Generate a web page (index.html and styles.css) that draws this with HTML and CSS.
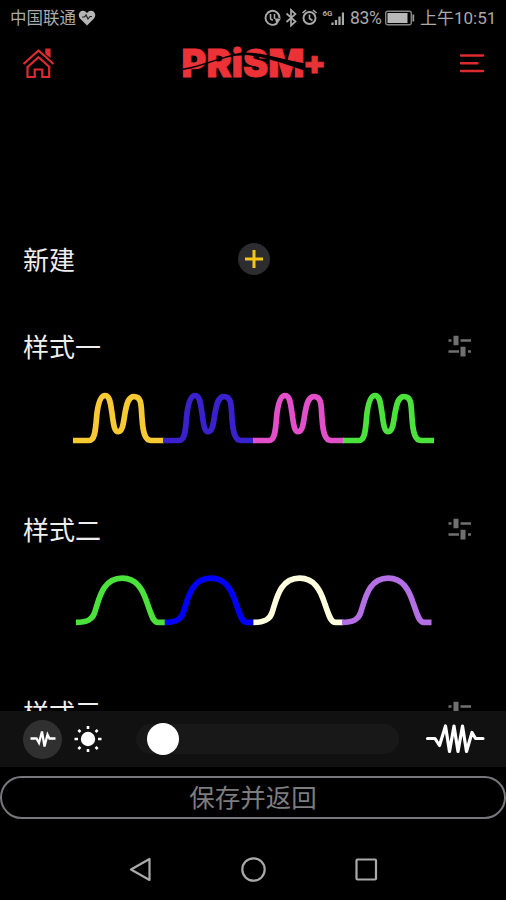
FILE: index.html
```html
<!DOCTYPE html>
<html lang="zh-CN">
<head>
  <meta charset="UTF-8">
  <meta name="viewport" content="width=device-width, initial-scale=1.0">
  <title>PRiSM+</title>
  <link rel="stylesheet" href="styles.css">
</head>
<body>
  <div class="screen">
    <!-- Status bar -->
    <div class="status-bar">
      <span class="carrier">中国联通</span>
      <svg class="heart" width="18" height="16" viewBox="0 0 18 16">
        <path d="M9 15.5 L2 8.5 C-1.5 4 3 -1.5 7.5 1.5 L9 3 L10.500 1.500 C15 -1.500 19.500 4 16 8.500 Z" fill="#b5b5b5"/>
        <path d="M4 7 H6.500 L8 5 L10 9 L12 6.500 H14" fill="none" stroke="#222" stroke-width="1.200"/>
      </svg>
      <div class="status-right">
        <svg width="82" height="20" viewBox="263 8 82 20" fill="none" stroke="#aaa" stroke-width="1.900">
          <path d="M278 23.200 A7 7 0 1 1 280.500 18"/>
          <path d="M271.500 14 V18 Q271.500 20 274 20 M275.500 14 V19" stroke-width="1.600"/>
          <path d="M276 18.500 H282 L277.500 25 Z" fill="#aaa" stroke="none"/>
          <path d="M287.500 13.500 L296.500 21.500 L292 25.500 V10 L296.500 14 L287.500 22" stroke-width="1.700"/>
          <circle cx="310.500" cy="18" r="6"/>
          <path d="M310.500 14.500 V18.500 L313.500 20.500 M303.500 13 L307 10 M314 10 L317.500 13" stroke-width="1.600"/>
          <text x="323.500" y="16" class="network">6G</text>
          <path d="M333.500 25 V22.500 M337 25 V20 M340.500 25 V16.500 M344 25 V12.500" stroke-width="2.300"/>
        </svg>
        <span class="percent">83%</span>
        <svg class="battery" width="30" height="16" viewBox="0 0 30 16">
          <rect x="0.700" y="1.200" width="25.600" height="13.600" rx="2" fill="none" stroke="#858585" stroke-width="1.400"/>
          <rect x="2.500" y="3" width="20" height="10" fill="#b8b8b8"/>
          <rect x="27.400" y="4.500" width="1.800" height="7" fill="#999"/>
        </svg>
        <span class="time">上午10:51</span>
      </div>
    </div>

    <!-- Header -->
    <header class="header">
      <svg width="34" height="32" viewBox="22 47 34 32" fill="none" stroke="#dc2a30" stroke-width="2.200">
        <path d="M23.500 64 L38.500 50.500 L53.500 64"/>
        <path d="M27.500 66.500 V77 H34.700 V69.500 H42.300 V77 H49.200 V66.500"/>
        <path d="M27 67.500 L38.500 57.300 L50 67.500"/>
        <path d="M45.300 48.500 H50.600 V58 L45.300 54 Z" fill="#dc2a30" stroke="none"/>
      </svg>
      <svg class="logo" width="152" height="54" viewBox="178 36 152 54">
        <text x="181.500" y="76.500" class="logo-text" textLength="123" lengthAdjust="spacingAndGlyphs">PRiSM</text>
        <text x="303" y="74" class="logo-plus" textLength="23" lengthAdjust="spacingAndGlyphs">+</text>
        <path d="M183 68.500 C204 65 223 56 239 53 C257 50.500 284 60 305 63.500 L304 70.500 C283 63.500 260 55 242 55 C224 56 205 66.500 183 70 Z" fill="#000"/>
      </svg>
      <svg width="26" height="24" viewBox="459 51 26 24" stroke="#dc2a30" stroke-width="2.400" stroke-linecap="round">
        <path d="M461 55.500 H483 M461 63.300 H477.500 M461 71 H483"/>
      </svg>
    </header>

    <!-- Style list -->
    <main class="list">
      <div class="new-row">
        <h2>新建</h2>
        <button class="add-btn">
          <svg width="18" height="18" viewBox="0 0 18 18" stroke="#f5c518" stroke-width="3"><path d="M0 9 H18 M9 0 V18"/></svg>
        </button>
      </div>

      <section class="style-item">
        <div class="style-head">
          <h2>样式一</h2>
          <svg class="adjust" viewBox="0 0 24 22"><path d="M0.500 5.500 H3.500 M12.500 5.500 H23 M0.500 16.500 H11 M20 16.500 H23"/><path class="knob" d="M8 0.700 V10.300 M15 11.700 V21.500"/></svg>
        </div>
        <svg class="wave" viewBox="0 380 506 75">
          <defs>
            <path id="double" d="M73 440.500 H89 C96 440.500 95.500 426 97 413 C98.500 402 101 395.500 105 395.500 C110 395.500 110.500 404 112 413 C113.500 425 114.500 431.700 118.300 431.700 C122.800 431.700 123.500 422 125 413 C127 402 129 396.500 134 396.500 C142 396.500 141 406 142 418 C143 434 145.500 440.500 151 440.500 H164"/>
          </defs>
          <use href="#double" stroke="#f7ca33"/>
          <use href="#double" x="90" stroke="#3b20ce"/>
          <use href="#double" x="180" stroke="#e34fca"/>
          <use href="#double" x="270" stroke="#4be33b"/>
        </svg>
      </section>

      <section class="style-item">
        <div class="style-head">
          <h2>样式二</h2>
          <svg class="adjust" viewBox="0 0 24 22"><path d="M0.500 5.500 H3.500 M12.500 5.500 H23 M0.500 16.500 H11 M20 16.500 H23"/><path class="knob" d="M8 0.700 V10.300 M15 11.700 V21.500"/></svg>
        </div>
        <svg class="wave" viewBox="0 563 506 75">
          <defs>
            <path id="single" d="M76 622.300 C88 622.300 92.500 619 94.500 613 C99 600 102 578.200 122.300 578.200 C137 578.200 143 590 147.500 604 C151.500 615 153 622.300 158 622.300 H165.500"/>
          </defs>
          <use href="#single" stroke="#4be33b"/>
          <use href="#single" x="88.700" stroke="#0000fa"/>
          <use href="#single" x="177.400" stroke="#ffffdf"/>
          <use href="#single" x="266" stroke="#b56fe4"/>
        </svg>
      </section>

      <section class="style-item">
        <div class="style-head">
          <h2>样式三</h2>
          <svg class="adjust" viewBox="0 0 24 22"><path d="M0.500 5.500 H3.500 M12.500 5.500 H23 M0.500 16.500 H11 M20 16.500 H23"/><path class="knob" d="M8 0.700 V10.300 M15 11.700 V21.500"/></svg>
        </div>
      </section>
    </main>

    <!-- Speed / brightness controls -->
    <div class="controls">
      <div class="mode active">
        <svg width="26" height="20" viewBox="0 0 26 20" fill="none" stroke="#fff" stroke-width="2.300"><path d="M0.500 9.500 H6.500 L9 14 L12 2.500 L14.500 17.500 L17.500 5.500 L19.500 9.500 H25.500"/></svg>
      </div>
      <svg class="sun" width="28" height="28" viewBox="-14 -14 28 28" stroke="#fff" stroke-width="2.600">
        <circle r="7.200" fill="#fff" stroke="none"/>
        <path d="M0 -13 V-10 M0 10 V13 M-13.500 0 H-10 M10 0 H13.500 M-9.700 -9 L-7.500 -7 M9.700 -9 L7.500 -7 M-9.700 10 L-7.500 8 M9.700 10 L7.500 8"/>
      </svg>
      <div class="slider"><div class="thumb"></div></div>
      <svg class="fast" width="60" height="32" viewBox="0 0 60 32" fill="none" stroke="#fff" stroke-width="3.200" stroke-linecap="round" stroke-linejoin="round">
        <path d="M2.500 15.500 H10 L14.500 22.500 L20.500 3 L24.500 28.500 L29 3 L33 28.500 L37.500 3 L41.500 28.500 L47 9.500 L50.500 15.500 H58"/>
      </svg>
    </div>

    <button class="save-btn">保存并返回</button>

    <nav class="nav-bar">
      <svg width="24" height="26" viewBox="0 0 24 26"><path d="M21.500 2 V23 L3 12.500 Z"/></svg>
      <svg width="26" height="26" viewBox="0 0 26 26"><circle cx="13.500" cy="12.500" r="11.200"/></svg>
      <svg width="24" height="26" viewBox="0 0 24 26"><rect x="2.500" y="2.500" width="19.500" height="20" rx="1"/></svg>
    </nav>
  </div>
</body>
</html>
```
FILE: styles.css
```css
* {
  margin: 0;
  padding: 0;
  box-sizing: border-box;
}

body {
  background-color: #000;
  color: #eee;
  font-family: Roboto, 'Noto Sans CJK SC', sans-serif;
  overflow: hidden;
}

svg {
  display: block;
  flex-shrink: 0;
}

.screen {
  width: 506px;
  height: 900px;
  display: flex;
  flex-direction: column;
}

/* Status bar */
.status-bar {
  height: 36px;
  padding: 0 11px 0 10px;
  display: flex;
  align-items: center;
  color: #aaa;
  font-size: 16.5px;
  line-height: 36px;
  white-space: nowrap;
}

.carrier {
  padding-top: 1px;
}

.heart {
  margin-left: 2px;
}

.status-right {
  margin-left: auto;
  display: flex;
  align-items: center;
}

.network {
  font-size: 8px;
  font-weight: 700;
  fill: #aaa;
  stroke: none;
}

.percent {
  width: 32px;
  margin-left: 6px;
  font-size: 17.5px;
  letter-spacing: -0.3px;
}

.battery {
  margin: 0 5px 0 3px;
}

.time {
  width: 75px;
  font-size: 17px;
}

/* Header */
.header {
  height: 54px;
  padding: 0 21px 0 22px;
  display: flex;
  align-items: center;
  justify-content: space-between;
}

.logo {
  margin-left: -8px;
}

.logo-text,
.logo-plus {
  font-family: Inter, sans-serif;
  font-weight: 900;
  font-size: 38px;
  fill: #ec3237;
  stroke: #ec3237;
  stroke-width: 0.8px;
}

.logo-plus {
  font-size: 32px;
}

/* Style list */
.list {
  height: 621px;
  overflow: hidden;
}

h2 {
  padding-top: 1px;
  font-size: 26px;
  font-weight: 400;
  line-height: 38px;
}

.new-row {
  height: 238px;
  padding: 150px 0 0 23px;
  display: flex;
  align-items: flex-start;
}

.new-row h2 {
  padding-top: 2px;
}

.add-btn {
  width: 32px;
  height: 32px;
  margin: 3px 0 0 163px;
  border: none;
  border-radius: 50%;
  background-color: #2d2d2f;
  display: flex;
  align-items: center;
  justify-content: center;
}

.style-item {
  height: 183px;
}

.style-head {
  height: 52px;
  padding: 0 34px 0 23px;
  display: flex;
  justify-content: space-between;
}

.adjust {
  width: 24px;
  height: 22px;
  margin-top: 7px;
  stroke: #707070;
  stroke-width: 2.5px;
}

.knob {
  stroke-width: 5px;
}

.wave {
  width: 506px;
  height: 75px;
  fill: none;
  stroke-width: 5.7px;
}

/* Controls */
.controls {
  height: 56px;
  padding: 0 21px 0 23px;
  display: flex;
  align-items: center;
  background-color: #111;
}

.mode {
  width: 39px;
  height: 39px;
  border-radius: 50%;
  display: flex;
  align-items: center;
  justify-content: center;
}

.mode.active {
  background-color: #303030;
}

.sun {
  margin-left: 12px;
}

.slider {
  width: 263px;
  height: 30px;
  margin-left: 34px;
  padding-left: 11px;
  border-radius: 15px;
  background-color: #181818;
  display: flex;
  align-items: center;
}

.thumb {
  width: 32px;
  height: 32px;
  border-radius: 50%;
  background-color: #fff;
}

.fast {
  margin-left: auto;
}

/* Save button */
.save-btn {
  height: 43px;
  margin-top: 8.5px;
  padding-top: 1px;
  border: 2px solid #77777b;
  border-radius: 22px;
  background: none;
  color: #7d7d80;
  font-family: inherit;
  font-size: 25.5px;
  line-height: 38px;
}

/* Android navigation */
.nav-bar {
  height: 60px;
  margin-top: 21.5px;
  display: flex;
  align-items: center;
  justify-content: center;
  gap: 88px;
}

.nav-bar svg {
  fill: none;
  stroke: #aaa;
  stroke-width: 2.2px;
  stroke-linejoin: round;
}
```
